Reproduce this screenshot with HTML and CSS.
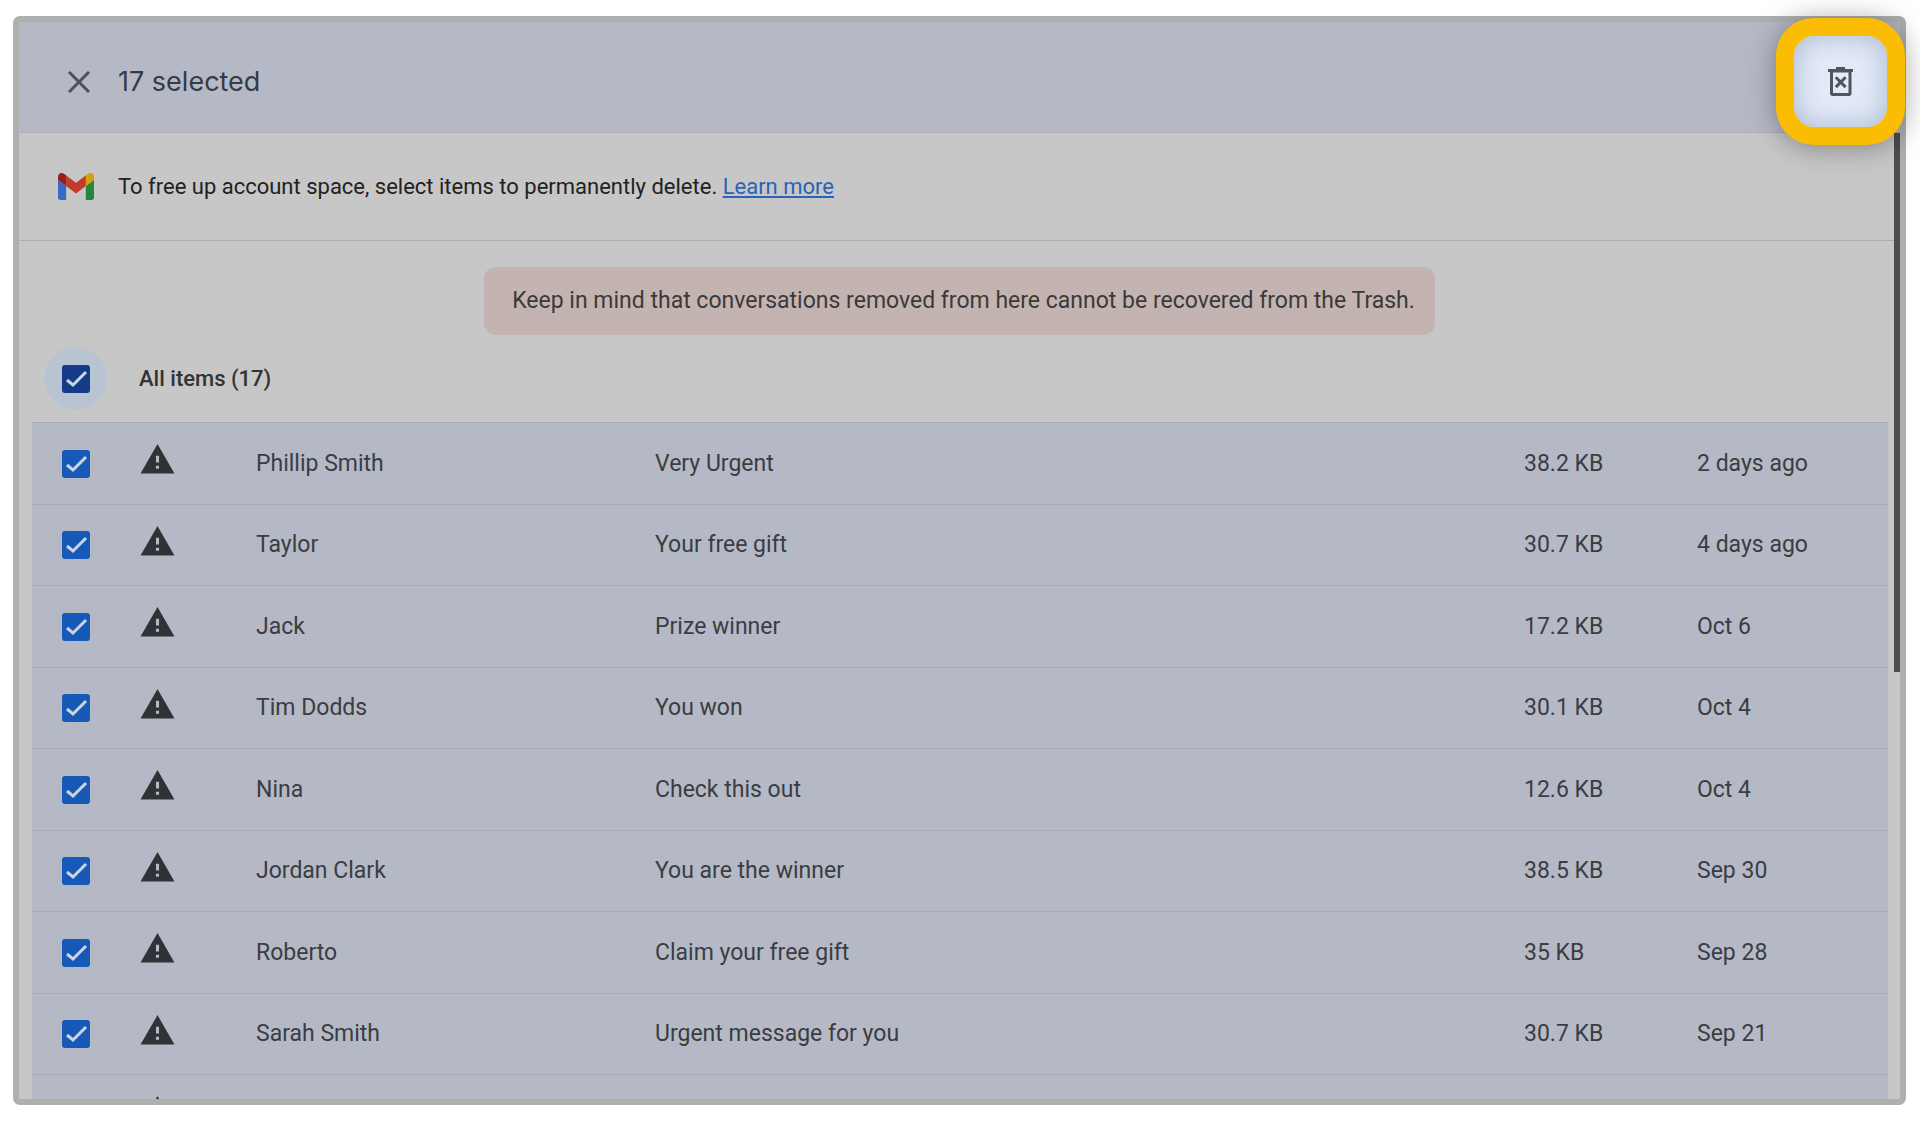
FILE: index.html
```html
<!DOCTYPE html>
<html lang="en">
<head>
    <meta charset="UTF-8">
    <title>17 selected</title>
    <link rel="stylesheet" href="styles.css">
</head>
<body>
    <svg class="defs" aria-hidden="true">
        <symbol id="warn" viewBox="0 0 24 24">
            <path d="M1 21h22L12 2 1 21zm12-3h-2v-2h2v2zm0-4h-2V9.600h2V14z"/>
        </symbol>
    </svg>
    <div id="panel">
        <div id="view">
            <header class="top-bar">
                <button class="close" type="button" aria-label="Close">
                    <svg width="22" height="22" viewBox="0 0 22 22"><path d="M1 1l20 20M21 1L1 21"/></svg>
                </button>
                <h1>17 selected</h1>
            </header>
            <div class="info">
                <svg width="36" height="27" viewBox="52 42 88 66">
                    <path fill="#3868c0" d="M58 108h14V74L52 59v43c0 3.320 2.690 6 6 6"/>
                    <path fill="#22873f" d="M120 108h14c3.320 0 6-2.690 6-6V59l-20 15"/>
                    <path fill="#d6a10a" d="M120 48v26l20-15v-8c0-7.420-8.470-11.650-14.400-7.200"/>
                    <path fill="#c23a2d" d="M72 74V48l24 18 24-18v26L96 92"/>
                    <path fill="#9c1d18" d="M52 51v8l20 15V48l-5.600-4.200c-5.940-4.450-14.400-.220-14.400 7.200"/>
                </svg>
                <p>To free up account space, select items to permanently delete. <a href="#">Learn more</a></p>
            </div>
            <p class="notice">Keep in mind that conversations removed from here cannot be recovered from the Trash.</p>
            <div class="all">
                <span class="halo"><input type="checkbox" id="all" checked></span>
                <label for="all">All items (17)</label>
            </div>
            <table>
                <colgroup>
                    <col class="c-check"><col class="c-icon"><col class="c-name"><col><col class="c-size"><col class="c-date">
                </colgroup>
                <tbody>
                    <tr>
                        <td><input type="checkbox" aria-label="Phillip Smith" checked></td>
                        <td class="icon"><svg><use href="#warn"/></svg></td>
                        <td>Phillip Smith</td><td>Very Urgent</td><td>38.2 KB</td><td>2 days ago</td>
                    </tr>
                    <tr>
                        <td><input type="checkbox" aria-label="Taylor" checked></td>
                        <td class="icon"><svg><use href="#warn"/></svg></td>
                        <td>Taylor</td><td>Your free gift</td><td>30.7 KB</td><td>4 days ago</td>
                    </tr>
                    <tr>
                        <td><input type="checkbox" aria-label="Jack" checked></td>
                        <td class="icon"><svg><use href="#warn"/></svg></td>
                        <td>Jack</td><td>Prize winner</td><td>17.2 KB</td><td>Oct 6</td>
                    </tr>
                    <tr>
                        <td><input type="checkbox" aria-label="Tim Dodds" checked></td>
                        <td class="icon"><svg><use href="#warn"/></svg></td>
                        <td>Tim Dodds</td><td>You won</td><td>30.1 KB</td><td>Oct 4</td>
                    </tr>
                    <tr>
                        <td><input type="checkbox" aria-label="Nina" checked></td>
                        <td class="icon"><svg><use href="#warn"/></svg></td>
                        <td>Nina</td><td>Check this out</td><td>12.6 KB</td><td>Oct 4</td>
                    </tr>
                    <tr>
                        <td><input type="checkbox" aria-label="Jordan Clark" checked></td>
                        <td class="icon"><svg><use href="#warn"/></svg></td>
                        <td>Jordan Clark</td><td>You are the winner</td><td>38.5 KB</td><td>Sep 30</td>
                    </tr>
                    <tr>
                        <td><input type="checkbox" aria-label="Roberto" checked></td>
                        <td class="icon"><svg><use href="#warn"/></svg></td>
                        <td>Roberto</td><td>Claim your free gift</td><td>35 KB</td><td>Sep 28</td>
                    </tr>
                    <tr>
                        <td><input type="checkbox" aria-label="Sarah Smith" checked></td>
                        <td class="icon"><svg><use href="#warn"/></svg></td>
                        <td>Sarah Smith</td><td>Urgent message for you</td><td>30.7 KB</td><td>Sep 21</td>
                    </tr>
                    <tr>
                        <td><input type="checkbox" aria-label="Message" checked></td>
                        <td class="icon"><svg><use href="#warn"/></svg></td>
                        <td></td><td></td><td></td><td></td>
                    </tr>
                </tbody>
            </table>
        </div>
        <div class="thumb"></div>
        <button class="delete" type="button" aria-label="Delete forever">
            <svg width="25" height="29" viewBox="0 0 25 29">
                <path d="M8 0h9v2h8v3h-1.500v21.500c0 1.500-1 2.500-2.500 2.500H4.500C3 29 2 28 2 26.500V5H0V2h8zM5 5.500v20.500h15.500V5.500z" fill-rule="evenodd"/>
                <path class="cross" d="M7.800 10.300l9.800 9.800M17.600 10.300l-9.800 9.800"/>
            </svg>
        </button>
    </div>
</body>
</html>
```

FILE: styles.css
```css
*{
    padding: 0;
    margin: 0;
    box-sizing: border-box;
}
body{
    height: 100vh;
    padding: 16px 14px 16px 13px;
    background: #fff;
    font: 22px/28px Roboto, "Noto Sans", sans-serif;
    color: #3a3d42;
    overflow: hidden;
}
.defs{
    display: none;
}
button{
    border: none;
    background: none;
    cursor: pointer;
}
#panel{
    height: 100%;
    position: relative;
    border: 6px solid #aeb0af;
    border-radius: 7px;
    background: #c7c7c7;
}
#view{
    height: 100%;
    overflow: hidden;
}
.top-bar{
    height: 111px;
    display: flex;
    align-items: center;
    gap: 28px;
    padding: 10px 49px 0;
    background: #b5b9c5;
    border-bottom: 1px solid #a9acb0;
}
.top-bar h1{
    font: 400 27px/36px Inter, Roboto, sans-serif;
    color: #363b46;
}
.close{
    display: flex;
}
.close path{
    fill: none;
    stroke: #4c515b;
    stroke-width: 3;
}
.info{
    height: 108px;
    display: flex;
    align-items: center;
    gap: 24px;
    padding: 0 39px;
    border-bottom: 1px solid #adadad;
    color: #222;
}
.info a{
    color: #2b63b5;
    text-decoration-thickness: 2px;
    text-underline-offset: 2px;
}
.notice{
    width: fit-content;
    margin: 26px auto 0;
    padding: 20px 20px 20px 28px;
    border-radius: 12px;
    background: #c4b4b1;
    font-size: 23px;
    color: #3c3938;
}
.all{
    display: flex;
    align-items: center;
    gap: 32px;
    height: 87px;
    padding-left: 25px;
}
.all label{
    font-weight: 500;
    color: #333;
}
.halo{
    display: flex;
    align-items: center;
    justify-content: center;
    width: 63px;
    height: 63px;
    border-radius: 50%;
    background: #b8c4d1;
}
input[type=checkbox]{
    appearance: none;
    display: block;
    width: 28px;
    height: 28px;
    border: 2px solid #1759b6;
    border-radius: 3px;
}
input[type=checkbox]:checked{
    background: #1759b6 url("data:image/svg+xml,%3Csvg xmlns='http://www.w3.org/2000/svg' viewBox='0 0 28 28'%3E%3Cpath d='M5 15l6 5L24 7' fill='none' stroke='%23ccd5e3' stroke-width='3'/%3E%3C/svg%3E") center/28px 28px no-repeat border-box;
}
#all{
    background-color: #133b88;
    border-color: #133b88;
}
table{
    width: calc(100% - 25px);
    margin: 0 12px 0 13px;
    table-layout: fixed;
    border-spacing: 0;
    background: #b5b9c5;
    font-size: 23px;
}
.c-check{
    width: 107px;
}
.c-icon{
    width: 117px;
}
.c-name{
    width: 399px;
}
.c-size{
    width: 173px;
}
.c-date{
    width: 191px;
}
tr{
    height: 82px;
}
tr:nth-child(even){
    height: 81px;
}
td{
    border-top: 1px solid #a7abb4;
    vertical-align: middle;
}
td:first-child{
    padding-left: 30px;
}
td.icon{
    padding-bottom: 8px;
}
.icon svg{
    display: block;
    width: 37px;
    height: 37px;
    fill: #2f3335;
}
.thumb{
    position: absolute;
    top: 111px;
    right: 0;
    width: 6px;
    height: 50%;
    background: #4b4d4e;
}
.delete{
    position: absolute;
    top: -4px;
    right: -5px;
    display: flex;
    align-items: center;
    justify-content: center;
    width: 129px;
    height: 127px;
    border: 18px solid #fbbc04;
    border-radius: 38px;
    background: #e4eafa;
    box-shadow: 0 2px 28px rgba(0, 0, 0, .35), inset 0 0 28px rgba(110, 135, 160, .5);
}
.delete path{
    fill: #51555c;
}
.delete .cross{
    fill: none;
    stroke: #51555c;
    stroke-width: 3;
}
```
